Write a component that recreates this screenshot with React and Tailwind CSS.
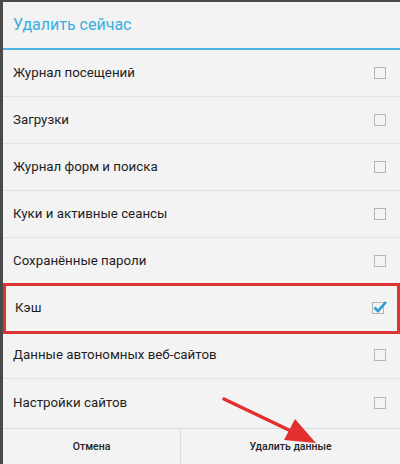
import React from 'react';

const items = [
  { label: 'Журнал посещений', checked: false },
  { label: 'Загрузки', checked: false },
  { label: 'Журнал форм и поиска', checked: false },
  { label: 'Куки и активные сеансы', checked: false },
  { label: 'Сохранённые пароли', checked: false },
  { label: 'Кэш', checked: true, marked: true },
  { label: 'Данные автономных веб-сайтов', checked: false },
  { label: 'Настройки сайтов', checked: false },
];

const Box = ({ checked }) => (
  <div className="relative w-[12px] h-[12px] border border-[#b5b5b5] bg-[#f4f4f4]">
    {checked && (
      <svg className="absolute -top-[3px] -left-[1px]" width="16" height="14" viewBox="0 0 16 14">
        <path d="M2.5 7.5 L6 11 L14 2" fill="none" stroke="#2b9bd6" strokeWidth="2.6" />
      </svg>
    )}
  </div>
);

export default function App() {
  return (
    <div className="relative w-[400px] h-[464px] overflow-hidden bg-[#f3f3f3] border-l-[3px] border-t-[2px] border-[#4a4a4a] flex flex-col" style={{ fontFamily: 'Roboto, "Noto Sans", sans-serif' }}>
      <div className="h-[46px] flex items-center pl-[10px] text-[16px] text-[#3aaee0] shrink-0">
        Удалить сейчас
      </div>
      <div className="h-[2px] bg-[#4ab3e2] shrink-0" />
      <div className="flex flex-col">
        {items.map((it, i) => (
          <div key={i} className={`h-[47px] shrink-0 flex items-center justify-between pl-[10px] pr-[14px] ${i < items.length - 1 ? 'border-b border-[#e2e2e2]' : ''} ${it.marked ? 'outline-[3px] outline outline-[#dd3333] -outline-offset-[1px] mx-[2px] pl-[8px] pr-[12px]' : ''}`}>
            <span className="text-[13.3px] text-[#1e1e1e]">{it.label}</span>
            <Box checked={it.checked} />
          </div>
        ))}
      </div>
      <div className="flex-1 flex border-t border-[#dcdcdc] mt-[2px]">
        <div className="w-[178px] flex items-center justify-center text-[10.5px] font-medium text-[#222] border-r border-[#dcdcdc]">Отмена</div>
        <div className="flex-1 flex items-center justify-center text-[10.5px] font-medium text-[#222]">Удалить данные</div>
      </div>
      <svg className="absolute left-0 top-0 pointer-events-none" width="400" height="464">
        <line x1="221" y1="397" x2="288" y2="429" stroke="#e23030" strokeWidth="3.5" strokeLinecap="round" />
        <polygon points="313,441 281,438 292,417" fill="#e23030" />
      </svg>
    </div>
  );
}
